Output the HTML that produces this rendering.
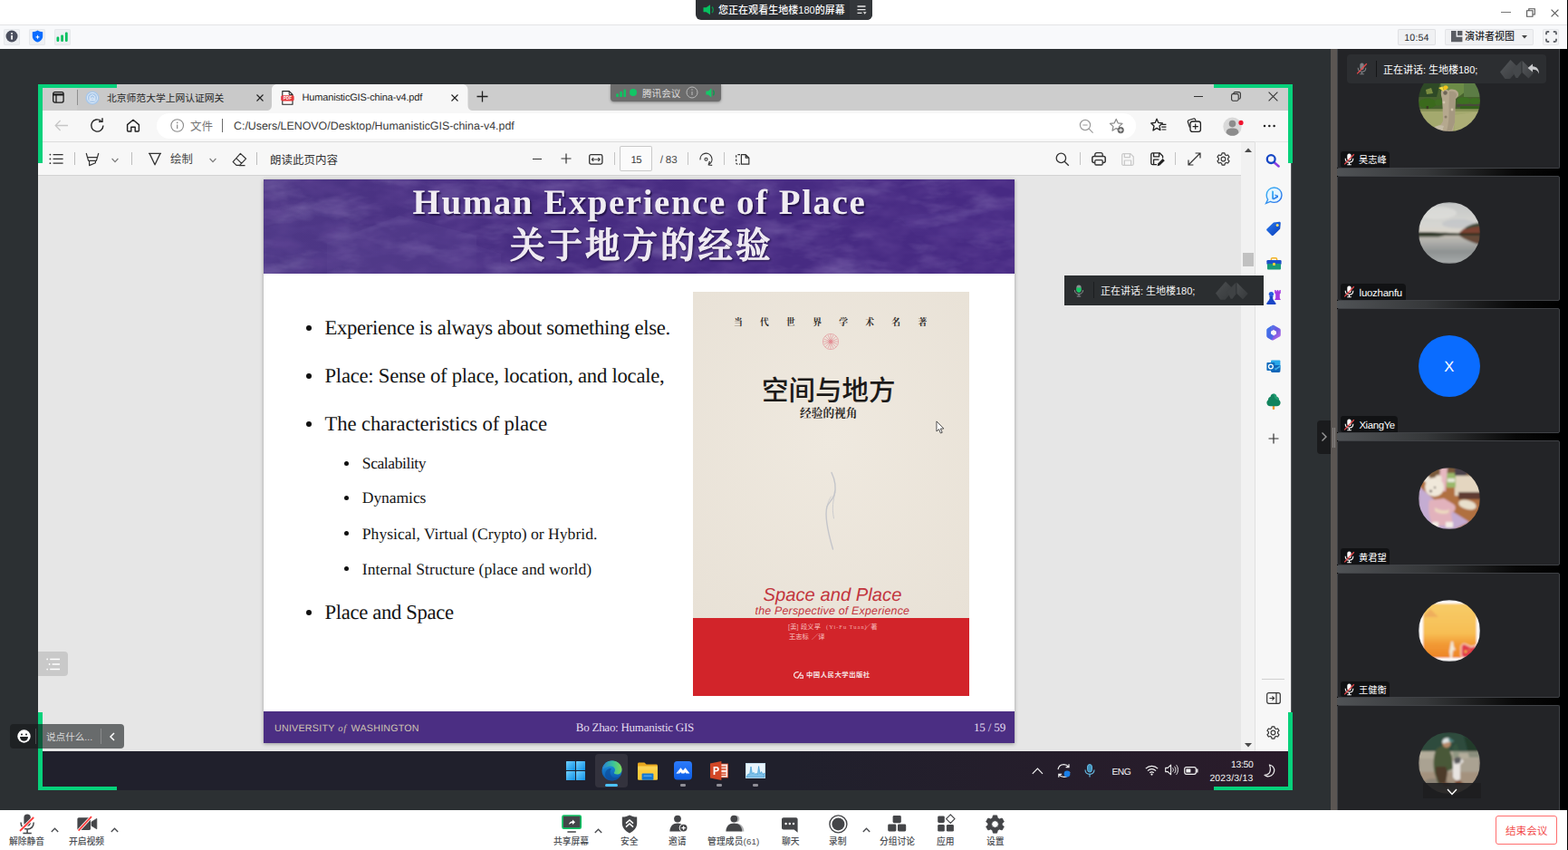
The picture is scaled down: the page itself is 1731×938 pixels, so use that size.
<!DOCTYPE html>
<html><head><meta charset="utf-8"><title>meeting</title>
<style>
html,body{margin:0;padding:0;background:#2c3033;}
body{width:1731px;height:938px;overflow:hidden;position:relative;font-family:"Liberation Sans",sans-serif;}
.a,.t,.cj{position:absolute;}
.t{white-space:pre;text-rendering:geometricPrecision;}
.cj{overflow:visible;}
.cj text{font-family:"Liberation Sans","Noto Sans CJK SC",sans-serif;font-size:1000px;white-space:pre;}
.cj text.sf{font-family:"Liberation Serif","Noto Serif CJK SC",serif;}
svg{display:block;}
.ic{position:absolute;fill:none;stroke:#1b1b1b;stroke-width:1.2;stroke-linecap:round;stroke-linejoin:round;}
</style></head><body>
<!-- ===== top title bar ===== -->
<div class="a" style="left:0;top:0;width:1731px;height:27px;background:#fff;"></div>
<div class="a" style="left:0;top:27px;width:1731px;height:1px;background:#e3e4e6;"></div>
<div class="a" style="left:0;top:28px;width:1731px;height:26px;background:#f8f9fb;"></div>

<!-- left icon buttons -->
<div class="a" style="left:4px;top:31.5px;width:18.4px;height:18px;background:#eef0f3;border-radius:2px;box-shadow:inset 0 0 0 1px #e6e8eb;"></div>
<div class="a" style="left:32px;top:31.5px;width:18.4px;height:18px;background:#eef0f3;border-radius:2px;box-shadow:inset 0 0 0 1px #e6e8eb;"></div>
<div class="a" style="left:60px;top:31.5px;width:18.4px;height:18px;background:#eef0f3;border-radius:2px;box-shadow:inset 0 0 0 1px #e6e8eb;"></div>
<svg class="a" style="left:6.1px;top:33.2px" width="14" height="14" viewBox="0 0 14 14"><circle cx="7" cy="7" r="6.5" fill="#4b4f5e"/><rect x="6.2" y="3.2" width="1.7" height="1.7" fill="#fff"/><rect x="6.2" y="6" width="1.7" height="4.6" fill="#fff"/></svg>
<svg class="a" style="left:34.8px;top:33.2px" width="13" height="14" viewBox="0 0 13 14"><path d="M6.5 .4 C8 1.6 10 2 12.2 2.2 V7 C12.2 10.5 9.5 12.6 6.5 13.6 C3.5 12.6 .8 10.5 .8 7 V2.2 C3 2 5 1.6 6.5 .4Z" fill="#0a6cff"/><path d="M6.5 5.2 L7.2 7.2 L9.2 7.9 L7.2 8.6 L6.5 10.6 L5.8 8.6 L3.8 7.9 L5.8 7.2Z" fill="#fff"/></svg>
<svg class="a" style="left:62.3px;top:34.8px" width="14" height="12" viewBox="0 0 14 12"><rect x=".5" y="5.6" width="2.8" height="5.4" rx="1.2" fill="#07c160"/><rect x="5.2" y="3.4" width="2.8" height="7.6" rx="1.2" fill="#07c160"/><rect x="9.9" y=".6" width="2.8" height="10.4" rx="1.2" fill="#07c160"/></svg>
<!-- center pill -->
<div class="a" style="left:768px;top:0;width:195px;height:21.5px;background:#2d3034;border-radius:0 0 6px 6px;"></div>
<div class="a" style="left:938px;top:0;width:25px;height:21.5px;background:#34373b;border-radius:0 0 6px 0;"></div>
<svg class="a" style="left:775.5px;top:5px" width="14" height="12" viewBox="0 0 14 12"><path d="M.5 3.2 H3.6 L8 .3 V11.2 L3.6 8.3 H.5Z" fill="#07c160"/><path d="M10 2.6 C11.6 4.4 11.6 7.2 10 9" fill="none" stroke="#0a8f4a" stroke-width="1.6"/></svg>
<svg class="cj" style="left:793.0px;top:4.08px;" width="139.81" height="13.20" viewBox="0 -1000 12710 1200" preserveAspectRatio="none"><text x="0" y="0" fill="#ffffff" font-weight="500" textLength="12710">您正在观看生地楼180的屏幕</text></svg>
<svg class="a" style="left:945.5px;top:5.5px" width="11" height="10" viewBox="0 0 11 10"><path d="M.5 1 H9.5 M.5 4.7 H9.5 M.5 8.4 H5.5" stroke="#e8e8e8" stroke-width="1.3" fill="none"/><path d="M6.8 7.3 H10.6 L8.7 9.8Z" fill="#e8e8e8"/></svg>
<!-- window controls -->
<div class="a" style="left:1657px;top:13px;width:11px;height:1.2px;background:#777;"></div>
<svg class="a" style="left:1684.5px;top:8.8px" width="10" height="10" viewBox="0 0 10 10"><path d="M.6 2.8 H7 V9.3 H.6Z M2.8 2.6 V.7 H9.3 V7 H7.2" fill="none" stroke="#555" stroke-width="1.1"/></svg>
<svg class="a" style="left:1712px;top:9.5px" width="9" height="9" viewBox="0 0 9 9"><path d="M.6 .6 L8.4 8.4 M8.4 .6 L.6 8.4" stroke="#555" stroke-width="1.1" fill="none"/></svg>
<!-- right toolbar buttons -->
<div class="a" style="left:1543px;top:31.5px;width:42px;height:18px;background:#f0f1f3;box-shadow:inset 0 0 0 1px #dfe0e3;border-radius:2px;"></div>
<span class="t" style="left:1550.30px;top:37.00px;font:normal normal 10.6px/10.6px 'Liberation Sans',sans-serif;color:#2a2c30;letter-spacing:0.155px;">10:54</span>
<div class="a" style="left:1595px;top:31.5px;width:98px;height:18px;background:#f0f1f3;box-shadow:inset 0 0 0 1px #e3e4e7;border-radius:2px;"></div>
<svg class="a" style="left:1602px;top:34.3px" width="13" height="13" viewBox="0 0 13 13"><path d="M0 0 H5.6 V6.8 H12.4 V12.3 H0Z" fill="#5a5d63"/><rect x="7" y="0" width="5.4" height="5.2" fill="#5a5d63"/></svg>
<svg class="cj" style="left:1617.0px;top:33.18px;" width="55.00" height="13.20" viewBox="0 -1000 5000 1200" preserveAspectRatio="none"><text x="0" y="0" fill="#26282c" font-weight="500">演讲者视图</text></svg>
<svg class="a" style="left:1680px;top:38.5px" width="6" height="4" viewBox="0 0 6 4"><path d="M0 0 H6 L3 3.6Z" fill="#444"/></svg>
<div class="a" style="left:1703px;top:31.5px;width:17.5px;height:18px;background:#f3f4f6;box-shadow:inset 0 0 0 1px #e6e7ea;border-radius:2px;"></div>
<svg class="a" style="left:1705.5px;top:34.2px" width="13" height="13" viewBox="0 0 13 13"><path d="M1 4.2 V2.4 C1 1.4 1.6 1 2.4 1 H4.2 M8.8 1 H10.6 C11.6 1 12 1.6 12 2.4 V4.2 M12 8.8 V10.6 C12 11.6 11.4 12 10.6 12 H8.8 M4.2 12 H2.4 C1.4 12 1 11.4 1 10.6 V8.8" fill="none" stroke="#63666c" stroke-width="1.9"/></svg>
<!--TOPBAR-->
<!-- ===== main dark area ===== -->
<div class="a" style="left:0;top:54px;width:1731px;height:840px;background:#2c3033;"></div>
<!-- ===== shared screen ===== -->
<div class="a" style="left:42px;top:93px;width:1384px;height:779px;background:#e6e6e6;"></div>

<!-- tab bar -->
<div class="a" style="left:42px;top:93px;width:1384px;height:29px;background:#cdcdcd;"></div>
<!-- address row -->
<div class="a" style="left:42px;top:122px;width:1384px;height:34px;background:#f7f7f7;"></div>
<div class="a" style="left:42px;top:156px;width:1343px;height:1px;background:#dcdcdc;"></div>
<div class="a" style="left:173px;top:125px;width:1081px;height:28px;background:#fff;border-radius:14px;"></div>
<!-- pdf toolbar -->
<div class="a" style="left:42px;top:157px;width:1343px;height:36px;background:#f7f7f7;"></div>
<div class="a" style="left:42px;top:193px;width:1328px;height:1px;background:#d2d2d2;"></div>
<!-- pdf scrollbar -->
<div class="a" style="left:1370px;top:157px;width:15px;height:672px;background:#f1f1f1;"></div>
<div class="a" style="left:1372px;top:279px;width:12px;height:15px;background:#c1c1c1;"></div>
<!-- edge sidebar -->
<div class="a" style="left:1385px;top:157px;width:41px;height:672px;background:#f7f7f7;"></div>
<div class="a" style="left:1385px;top:157px;width:1px;height:672px;background:#e0e0e0;"></div>
<!-- slide -->
<div class="a" style="left:291px;top:198px;width:829px;height:622px;background:#fff;box-shadow:0 1px 4px rgba(0,0,0,.35);"></div>
<div class="a" style="left:291px;top:785px;width:829px;height:35px;background:#4b2e83;"></div>
<!-- book -->
<div class="a" style="left:765px;top:682px;width:305px;height:86px;background:#d2242a;"></div>
<!-- taskbar -->
<div class="a" style="left:42px;top:829px;width:1384px;height:43px;background:linear-gradient(90deg,#20202c 0%,#20202c 60%,#2a1b2a 100%);"></div>

<!-- tab bar content -->
<div class="a" style="left:85px;top:93px;width:215px;height:29px;background:#c9c9c9;border-radius:0 0 6px 0;"></div>
<svg class="a" style="left:57.5px;top:101px" width="13" height="13" viewBox="0 0 13 13"><rect x=".7" y=".7" width="11.4" height="11.4" rx="2" fill="none" stroke="#1a1a1a" stroke-width="1.3"/><path d="M.7 3.4 H12.1" stroke="#1a1a1a" stroke-width="2.2"/><path d="M4 3 V12" stroke="#1a1a1a" stroke-width="1.3"/></svg>
<div class="a" style="left:84.5px;top:99px;width:1px;height:17px;background:#8f8f8f;"></div>
<svg class="a" style="left:94px;top:99.5px" width="16" height="16" viewBox="0 0 16 16"><circle cx="8" cy="8" r="7.6" fill="#a9c8ea"/><circle cx="8" cy="8" r="5.6" fill="none" stroke="#dbe9f7" stroke-width="1"/><path d="M5.2 10.5 V6.5 L8 4.5 L10.8 6.5 V10.5 M4.6 10.8 H11.4 M6.8 10.5 V8 H9.2 V10.5" fill="none" stroke="#eaf2fb" stroke-width=".9"/></svg>
<svg class="cj" style="left:118.0px;top:100.6px;" width="129.60" height="12.96" viewBox="0 -1000 12000 1200" preserveAspectRatio="none"><text x="0" y="0" fill="#262626">北京师范大学上网认证网关</text></svg>
<svg class="a" style="left:282.7px;top:103.7px" width="8" height="8" viewBox="0 0 8 8"><path d="M.5 .5 L7.5 7.5 M7.5 .5 L.5 7.5" stroke="#1f1f1f" stroke-width="1.1" fill="none"/></svg>
<!-- active tab -->
<svg class="a" style="left:294px;top:93px" width="230" height="29" viewBox="0 0 230 29"><path d="M0 29 C4 29 6 27 6 23 V6 C6 2.5 8.5 0 12 0 H216.5 C220 0 222.5 2.5 222.5 6 V23 C222.5 27 224.5 29 228.5 29Z" fill="#f7f7f7"/></svg>
<svg class="a" style="left:309.5px;top:99.5px" width="15" height="16" viewBox="0 0 15 16"><path d="M1.8 .6 H9.2 L13 4.4 V15.2 H1.8Z" fill="#fff" stroke="#222" stroke-width="1.1" stroke-linejoin="round"/><path d="M9.2 .6 V4.4 H13" fill="none" stroke="#222" stroke-width="1"/><rect x=".2" y="5.2" width="14.4" height="6.2" rx="1.6" fill="#e5383b"/><text x="7.4" y="10" font-family="Liberation Sans,sans-serif" font-size="4.6" font-weight="bold" fill="#fff" text-anchor="middle">PDF</text></svg>
<span class="t" style="left:333.50px;top:103.00px;font:normal normal 11.0px/11.0px 'Liberation Sans',sans-serif;color:#262626;letter-spacing:-0.167px;">HumanisticGIS-china-v4.pdf</span>
<svg class="a" style="left:498.4px;top:103.6px" width="8" height="8" viewBox="0 0 8 8"><path d="M.5 .5 L7.5 7.5 M7.5 .5 L.5 7.5" stroke="#1f1f1f" stroke-width="1.1" fill="none"/></svg>
<svg class="a" style="left:525.5px;top:100px" width="13" height="13" viewBox="0 0 13 13"><path d="M6.5 .5 V12.5 M.5 6.5 H12.5" stroke="#1f1f1f" stroke-width="1.3" fill="none"/></svg>
<!-- edge window controls -->
<div class="a" style="left:1318px;top:106.2px;width:10px;height:1.2px;background:#333;"></div>
<svg class="a" style="left:1358.5px;top:101.3px" width="11" height="11" viewBox="0 0 11 11"><rect x=".6" y="2.6" width="7.6" height="7.6" rx="1.6" fill="none" stroke="#333" stroke-width="1.1"/><path d="M2.8 2.4 C2.8 1.2 3.6 .6 4.6 .6 H8.4 C9.6 .6 10.4 1.4 10.4 2.6 V6.4 C10.4 7.4 9.8 8.2 8.6 8.2" fill="none" stroke="#333" stroke-width="1.1"/></svg>
<svg class="a" style="left:1400.2px;top:101.3px" width="11" height="11" viewBox="0 0 11 11"><path d="M.6 .6 L10.4 10.4 M10.4 .6 L.6 10.4" stroke="#333" stroke-width="1.1" fill="none"/></svg>
<!-- nav icons -->
<svg class="a" style="left:59.5px;top:132px" width="16" height="13" viewBox="0 0 16 13"><path d="M15 6.5 H1.2 M6.6 1 L1.2 6.5 L6.6 12" fill="none" stroke="#c6c6c6" stroke-width="1.3"/></svg>
<svg class="a" style="left:99px;top:130px" width="17" height="17" viewBox="0 0 17 17"><path d="M14.9 8.5 A6.6 6.6 0 1 1 12.6 3.5" fill="none" stroke="#222" stroke-width="1.4"/><path d="M9.6 3.9 H13.6 V0" fill="none" stroke="#222" stroke-width="1.4" transform="translate(.4,.3)"/></svg>
<svg class="a" style="left:139px;top:131px" width="16" height="15" viewBox="0 0 16 15"><path d="M1.6 6.6 L8 1.2 L14.4 6.6 V13 C14.4 13.6 14 14 13.4 14 H10.2 V9.2 H5.8 V14 H2.6 C2 14 1.6 13.6 1.6 13Z" fill="none" stroke="#222" stroke-width="1.4" stroke-linejoin="round"/></svg>
<svg class="a" style="left:187.5px;top:131px" width="16" height="16" viewBox="0 0 16 16"><circle cx="7.7" cy="7.5" r="6.8" fill="none" stroke="#8a8a8a" stroke-width="1.1"/><path d="M7.7 6.6 V11" stroke="#8a8a8a" stroke-width="1.2"/><circle cx="7.7" cy="4.4" r=".8" fill="#8a8a8a"/></svg>
<svg class="cj" style="left:210.2px;top:130.85px;" width="25.00" height="15.00" viewBox="0 -1000 2000 1200" preserveAspectRatio="none"><text x="0" y="0" fill="#757575">文件</text></svg>
<div class="a" style="left:245px;top:131px;width:1px;height:15px;background:#6a6a6a;"></div>
<span class="t" style="left:258.00px;top:133.00px;font:normal normal 12.4px/12.4px 'Liberation Sans',sans-serif;color:#3a3a3a;letter-spacing:-0.002px;">C:/Users/LENOVO/Desktop/HumanisticGIS-china-v4.pdf</span>
<!-- pdf toolbar left -->
<svg class="a" style="left:54px;top:169px" width="17" height="13" viewBox="0 0 17 13"><path d="M4.6 1.6 H15.6 M4.6 6.4 H15.6 M4.6 11.2 H15.6" stroke="#333" stroke-width="1.3"/><circle cx="1.4" cy="1.6" r=".9" fill="#333"/><circle cx="1.4" cy="6.4" r=".9" fill="#333"/><circle cx="1.4" cy="11.2" r=".9" fill="#333"/></svg>
<div class="a" style="left:82px;top:168px;width:1px;height:14px;background:#bdbdbd;"></div>
<svg class="a" style="left:93.5px;top:167.5px" width="16" height="16" viewBox="0 0 16 16"><path d="M1.2 1 L3.6 9.4 H12.4 L14.8 1 M2.6 5.6 H13.4 M4.6 9.6 V14.6 L11.4 11.8 V9.6" fill="none" stroke="#333" stroke-width="1.2" stroke-linejoin="round"/></svg>
<svg class="a" style="left:122.5px;top:173.5px" width="8" height="6" viewBox="0 0 8 6"><path d="M.6 1 L4 4.6 L7.4 1" fill="none" stroke="#777" stroke-width="1.1"/></svg>
<div class="a" style="left:144.5px;top:168px;width:1px;height:14px;background:#bdbdbd;"></div>
<svg class="a" style="left:162.5px;top:168px" width="16" height="15" viewBox="0 0 16 15"><path d="M1 1.4 H15 M2.2 1.6 L8 13.8 L13.8 1.6" fill="none" stroke="#333" stroke-width="1.3" stroke-linejoin="round"/></svg>
<svg class="cj" style="left:188.0px;top:167.91px;" width="24.80" height="14.88" viewBox="0 -1000 2000 1200" preserveAspectRatio="none"><text x="0" y="0" fill="#444">绘制</text></svg>
<svg class="a" style="left:230.5px;top:173.5px" width="8" height="6" viewBox="0 0 8 6"><path d="M.6 1 L4 4.6 L7.4 1" fill="none" stroke="#777" stroke-width="1.1"/></svg>
<svg class="a" style="left:255.5px;top:167.5px" width="17" height="16" viewBox="0 0 17 16"><path d="M9.4 1.4 L15.6 7.2 L8.6 14.4 H5 L1.2 10.6Z M4.8 6.6 L10.8 12.4 M8 14.6 H14.5" fill="none" stroke="#333" stroke-width="1.2" stroke-linejoin="round"/></svg>
<div class="a" style="left:283px;top:168px;width:1px;height:14px;background:#bdbdbd;"></div>
<svg class="cj" style="left:298.4px;top:167.85px;" width="75.00" height="15.00" viewBox="0 -1000 6000 1200" preserveAspectRatio="none"><text x="0" y="0" fill="#333">朗读此页内容</text></svg>

<!-- address bar right icons -->
<svg class="a" style="left:1191px;top:130.5px" width="17" height="17" viewBox="0 0 17 17"><circle cx="7" cy="7" r="5.6" fill="none" stroke="#9a9a9a" stroke-width="1.2"/><path d="M11.2 11.2 L15.6 15.6 M4.4 7 H9.6" stroke="#9a9a9a" stroke-width="1.2" fill="none"/></svg>
<svg class="a" style="left:1223.5px;top:129.5px" width="19" height="19" viewBox="0 0 19 19"><path d="M8.2 1.4 L10.2 5.8 L15 6.4 L11.4 9.6 L12.2 13.6 L8.2 11.6 L4 14.2 L5 9.6 L1.4 6.4 L6.2 5.8Z" fill="none" stroke="#8a8a8a" stroke-width="1.2" stroke-linejoin="round"/><circle cx="13.2" cy="13.6" r="3.6" fill="#6a6a6a"/><path d="M13.2 11.6 V15.6 M11.2 13.6 H15.2" stroke="#fff" stroke-width="1"/></svg>
<svg class="a" style="left:1269.5px;top:130px" width="19" height="17" viewBox="0 0 19 17"><path d="M7 1.2 L8.9 5.4 L13.4 6 L10 9 L10.9 13.6 L7 11.4 L3 14 L4 9 L.8 6 L5.2 5.4Z" fill="none" stroke="#1f1f1f" stroke-width="1.3" stroke-linejoin="round"/><path d="M12.6 7.4 H17.4 M12.2 10.2 H17.4 M12.6 13 H17.4" stroke="#1f1f1f" stroke-width="1.2"/></svg>
<svg class="a" style="left:1309px;top:130px" width="18" height="18" viewBox="0 0 18 18"><path d="M4.4 10.6 L2.4 4.6 C2.1 3.6 2.6 2.8 3.6 2.5 L8.6 1 C9.6 .7 10.4 1.2 10.7 2.2 L11 3.4" fill="none" stroke="#1f1f1f" stroke-width="1.2"/><rect x="5" y="4" width="11.4" height="11.4" rx="2.4" fill="#f7f7f7" stroke="#1f1f1f" stroke-width="1.3"/><path d="M10.7 6.6 V12.8 M7.6 9.7 H13.8" stroke="#1f1f1f" stroke-width="1.2"/></svg>
<svg class="a" style="left:1349.5px;top:128.5px" width="24" height="22" viewBox="0 0 24 22"><circle cx="10.5" cy="10.8" r="10.2" fill="#d9d9d9"/><circle cx="10.5" cy="7.6" r="3.8" fill="#8c8c8c"/><path d="M3.6 17.4 C3.6 13.6 6.4 12.4 10.5 12.4 C14.6 12.4 17.4 13.6 17.4 17.4 C15.8 19.6 13.4 20.8 10.5 20.8 C7.6 20.8 5.2 19.6 3.6 17.4Z" fill="#8c8c8c"/><circle cx="20" cy="6.4" r="2.6" fill="#f0142f"/></svg>
<svg class="a" style="left:1394px;top:137px" width="15" height="4" viewBox="0 0 15 4"><circle cx="2" cy="2" r="1.25" fill="#1f1f1f"/><circle cx="7.3" cy="2" r="1.25" fill="#1f1f1f"/><circle cx="12.6" cy="2" r="1.25" fill="#1f1f1f"/></svg>
<!-- pdf toolbar center -->
<div class="a" style="left:588px;top:174.6px;width:10px;height:1.2px;background:#333;"></div>
<svg class="a" style="left:619px;top:169px" width="12" height="12" viewBox="0 0 12 12"><path d="M6 .5 V11.5 M.5 6 H11.5" stroke="#333" stroke-width="1.2" fill="none"/></svg>
<svg class="a" style="left:650px;top:169.5px" width="16" height="12" viewBox="0 0 16 12"><rect x=".7" y=".7" width="14.2" height="10.4" rx="1.8" fill="none" stroke="#333" stroke-width="1.3"/><path d="M3.4 6 H12.2 M5.2 4.2 L3.4 6 L5.2 7.8 M10.4 4.2 L12.2 6 L10.4 7.8" fill="none" stroke="#333" stroke-width="1.1"/></svg>
<div class="a" style="left:677.5px;top:168px;width:1px;height:14px;background:#c4c4c4;"></div>
<div class="a" style="left:684px;top:160.5px;width:36px;height:28.5px;background:#fbfbfb;box-shadow:inset 0 0 0 1px #c9c9c9;border-radius:2px;"></div>
<span class="t" style="left:696.40px;top:172.00px;font:normal normal 11.4px/11.4px 'Liberation Sans',sans-serif;color:#3a3a3a;letter-spacing:-0.440px;">15</span>
<span class="t" style="left:728.80px;top:171.00px;font:normal normal 11.6px/11.6px 'Liberation Sans',sans-serif;color:#4a4a4a;letter-spacing:-0.187px;">/ 83</span>
<div class="a" style="left:758.5px;top:168px;width:1px;height:14px;background:#c4c4c4;"></div>
<svg class="a" style="left:771px;top:166.5px" width="18" height="18" viewBox="0 0 18 18"><path d="M2 9.4 A6.5 6.5 0 1 1 11.6 14.4" fill="none" stroke="#333" stroke-width="1.2"/><path d="M12.4 11 L11.2 15 L15.2 15.4" fill="none" stroke="#333" stroke-width="1.2" stroke-linejoin="round"/><circle cx="8.5" cy="8.7" r="1.5" fill="none" stroke="#333" stroke-width="1.1"/></svg>
<div class="a" style="left:799px;top:168px;width:1px;height:14px;background:#c4c4c4;"></div>
<svg class="a" style="left:811.5px;top:169.5px" width="16" height="12" viewBox="0 0 16 12"><path d="M6.4 .7 H11.2 L14.8 4.2 V11.2 H6.4Z M11.2 .7 V4.2 H14.8" fill="none" stroke="#333" stroke-width="1.2" stroke-linejoin="round"/><path d="M5 .7 H2.2 C1.2 .7 .7 1.2 .7 2.2 V9.8 C.7 10.8 1.2 11.2 2.2 11.2 H5" fill="none" stroke="#333" stroke-width="1.2" stroke-dasharray="2.6 1.6"/></svg>
<!-- pdf toolbar right -->
<svg class="a" style="left:1164.5px;top:167.5px" width="16" height="16" viewBox="0 0 16 16"><circle cx="6.4" cy="6.4" r="5.2" fill="none" stroke="#333" stroke-width="1.3"/><path d="M10.2 10.2 L14.8 14.8" stroke="#333" stroke-width="1.3"/></svg>
<div class="a" style="left:1192px;top:168px;width:1px;height:14px;background:#c4c4c4;"></div>
<svg class="a" style="left:1204.5px;top:168px" width="16" height="15" viewBox="0 0 16 15"><path d="M3.8 4.4 V2.6 C3.8 1.4 4.6 .7 5.8 .7 H10.2 C11.4 .7 12.2 1.4 12.2 2.6 V4.4" fill="none" stroke="#333" stroke-width="1.3"/><rect x=".8" y="4.4" width="14.4" height="7" rx="2" fill="none" stroke="#333" stroke-width="1.5"/><rect x="3.8" y="8.6" width="8.4" height="5.4" rx="1.2" fill="#f7f7f7" stroke="#333" stroke-width="1.3"/></svg>
<svg class="a" style="left:1238px;top:168.5px" width="14" height="14" viewBox="0 0 14 14"><path d="M.7 2.2 C.7 1.2 1.2 .7 2.2 .7 H10 L13.3 4 V11.8 C13.3 12.8 12.8 13.3 11.8 13.3 H2.2 C1.2 13.3 .7 12.8 .7 11.8Z M3.4 .8 V4.6 H9.4 V.8 M3.4 13.2 V8 H10.6 V13.2" fill="none" stroke="#c9c9c9" stroke-width="1.2" stroke-linejoin="round"/></svg>
<svg class="a" style="left:1270px;top:168px" width="17" height="16" viewBox="0 0 17 16"><path d="M7 13.6 H2.4 C1.4 13.6 .8 13 .8 12 V2.4 C.8 1.4 1.4 .8 2.4 .8 H10.2 L13.6 4.2 V6.4 M3.6 1 V4.8 H9.6 V1 M3.6 13.4 V8.2 H9.4" fill="none" stroke="#222" stroke-width="1.3" stroke-linejoin="round"/><path d="M13.6 7 L15.8 9.2 L10.4 14.6 L7.6 15.2 L8.2 12.4Z" fill="#222"/></svg>
<div class="a" style="left:1297px;top:168px;width:1px;height:14px;background:#c4c4c4;"></div>
<svg class="a" style="left:1311px;top:168px" width="15" height="15" viewBox="0 0 15 15"><path d="M1 14 L14 1 M8.6 1 H14 V6.4 M1 8.6 V14 H6.4" fill="none" stroke="#333" stroke-width="1.2"/></svg>
<svg class="a" style="left:1342px;top:167px" width="17" height="17" viewBox="0 0 24 24"><path d="M12 8.6 A3.4 3.4 0 1 0 12 15.4 A3.4 3.4 0 1 0 12 8.600001Z M10 2.6 L9.4 5.2 L7.4 6.4 L4.8 5.6 L2.8 9 L4.8 10.8 V13.2 L2.8 15 L4.8 18.4 L7.4 17.6 L9.4 18.8 L10 21.4 H14 L14.6 18.8 L16.6 17.6 L19.2 18.4 L21.2 15 L19.2 13.2 V10.8 L21.2 9 L19.2 5.6 L16.6 6.4 L14.6 5.2 L14 2.6Z" fill="none" stroke="#333" stroke-width="1.7" stroke-linejoin="round"/></svg>
<svg class="a" style="left:1373.5px;top:163px" width="8" height="5" viewBox="0 0 8 5"><path d="M0 5 L4 .4 L8 5Z" fill="#4a4a4a"/></svg>
<svg class="a" style="left:1373.5px;top:819.5px" width="8" height="5" viewBox="0 0 8 5"><path d="M0 0 L4 4.6 L8 0Z" fill="#4a4a4a"/></svg>

<!-- slide header decoration -->
<svg class="a" style="left:291px;top:198px" width="829" height="104" viewBox="0 0 829 104">
<defs><linearGradient id="hg" x1="0" y1="0" x2="1" y2="0"><stop offset="0" stop-color="#4c3684"/><stop offset=".4" stop-color="#472c81"/><stop offset="1" stop-color="#472a83"/></linearGradient>
<filter id="nz" x="0" y="0" width="100%" height="100%"><feTurbulence type="fractalNoise" baseFrequency="0.018 0.045" numOctaves="4" seed="11"/><feColorMatrix type="matrix" values="0 0 0 0 0.62  0 0 0 0 0.55  0 0 0 0 0.85  0.6 0 0 0 -0.29"/></filter>
<filter id="nz2" x="0" y="0" width="100%" height="100%"><feTurbulence type="fractalNoise" baseFrequency="0.03 0.06" numOctaves="3" seed="4"/><feColorMatrix type="matrix" values="0 0 0 0 0.16  0 0 0 0 0.08  0 0 0 0 0.36  0 0.7 0 0 -0.25"/></filter></defs>
<rect width="829" height="104" fill="url(#hg)"/>
<rect width="829" height="104" filter="url(#nz)"/>
<rect width="829" height="104" filter="url(#nz2)"/>
<g fill="#6a55a0" opacity=".2"><path d="M70 70 L150 40 L235 62 L235 104 L70 104Z"/><path d="M130 78 L215 66 L262 82 L262 104 L130 104Z" opacity=".8"/><path d="M0 55 L60 30 L95 45 L95 104 L0 104Z" opacity=".5"/><path d="M700 40 L829 30 L829 70 L720 62Z" opacity=".4"/></g>
</svg>
<span class="t" style="left:455.60px;top:204.00px;font:normal bold 39.0px/39.0px 'Liberation Serif',serif;color:#f0ecf2;letter-spacing:1.528px;text-shadow:1.5px 1.5px 1.5px rgba(20,8,50,.75);">Human Experience of Place</span>
<svg class="cj" style="left:562.94px;top:245.93px;filter:drop-shadow(1.5px 1.5px 1px rgba(20,8,50,.75));" width="287.52" height="46.20" viewBox="0 -1000 7468 1200" preserveAspectRatio="none"><text class="sf" x="0" y="0" fill="#efeaf2" stroke="#efeaf2" stroke-width="36.0" font-weight="500" letter-spacing="78">关于地方的经验</text></svg>
<!-- slide body -->
<div class="a" style="left:338.5px;top:359px;width:6.4px;height:6.4px;margin:-.5px 0 0 -.5px;border-radius:50%;background:#111;"></div>
<span class="t" style="left:358.50px;top:351.00px;font:normal normal 22.7px/22.7px 'Liberation Serif',serif;color:#141414;letter-spacing:-0.312px;">Experience is always about something else.</span>
<div class="a" style="left:338.5px;top:412.3px;width:6.4px;height:6.4px;margin:-.5px 0 0 -.5px;border-radius:50%;background:#111;"></div>
<span class="t" style="left:358.50px;top:404.00px;font:normal normal 22.7px/22.7px 'Liberation Serif',serif;color:#141414;letter-spacing:-0.254px;">Place: Sense of place, location, and locale,</span>
<div class="a" style="left:338.5px;top:465.4px;width:6.4px;height:6.4px;margin:-.5px 0 0 -.5px;border-radius:50%;background:#111;"></div>
<span class="t" style="left:358.50px;top:457.00px;font:normal normal 22.7px/22.7px 'Liberation Serif',serif;color:#141414;letter-spacing:-0.122px;">The characteristics of place</span>
<div class="a" style="left:380px;top:509px;width:5px;height:5px;margin:-.4px 0 0 -.4px;border-radius:50%;background:#111;"></div>
<span class="t" style="left:399.80px;top:503.00px;font:normal normal 17.6px/17.6px 'Liberation Serif',serif;color:#141414;letter-spacing:-0.443px;">Scalability</span>
<div class="a" style="left:380px;top:547px;width:5px;height:5px;margin:-.4px 0 0 -.4px;border-radius:50%;background:#111;"></div>
<span class="t" style="left:399.80px;top:541.00px;font:normal normal 17.6px/17.6px 'Liberation Serif',serif;color:#141414;letter-spacing:-0.095px;">Dynamics</span>
<div class="a" style="left:380px;top:586.7px;width:5px;height:5px;margin:-.4px 0 0 -.4px;border-radius:50%;background:#111;"></div>
<span class="t" style="left:399.80px;top:581.00px;font:normal normal 17.6px/17.6px 'Liberation Serif',serif;color:#141414;letter-spacing:-0.001px;">Physical, Virtual (Crypto) or Hybrid.</span>
<div class="a" style="left:380px;top:625.6px;width:5px;height:5px;margin:-.4px 0 0 -.4px;border-radius:50%;background:#111;"></div>
<span class="t" style="left:399.80px;top:620.00px;font:normal normal 17.6px/17.6px 'Liberation Serif',serif;color:#141414;letter-spacing:0.037px;">Internal Structure (place and world)</span>
<div class="a" style="left:338.5px;top:673.6px;width:6.4px;height:6.4px;margin:-.5px 0 0 -.5px;border-radius:50%;background:#111;"></div>
<span class="t" style="left:358.50px;top:665.00px;font:normal normal 22.7px/22.7px 'Liberation Serif',serif;color:#141414;letter-spacing:-0.346px;">Place and Space</span>
<!-- slide footer -->
<span class="t" style="left:303.00px;top:799.00px;font:normal normal 10.7px/10.7px 'Liberation Sans',sans-serif;color:#cfc5b2;letter-spacing:0.239px;">UNIVERSITY</span>
<span class="t" style="left:373.20px;top:800.00px;font:italic normal 10.5px/10.5px 'Liberation Serif',serif;color:#cfc5b2;letter-spacing:0.716px;">of</span>
<span class="t" style="left:387.60px;top:799.00px;font:normal normal 10.7px/10.7px 'Liberation Sans',sans-serif;color:#cfc5b2;letter-spacing:0.218px;">WASHINGTON</span>
<span class="t" style="left:635.80px;top:796.00px;font:normal normal 13.0px/13.0px 'Liberation Serif',serif;color:#e4ddef;letter-spacing:-0.258px;">Bo Zhao: Humanistic GIS</span>
<span class="t" style="left:1075.00px;top:796.00px;font:normal normal 13.0px/13.0px 'Liberation Serif',serif;color:#e4ddef;letter-spacing:-0.159px;">15 / 59</span>

<!-- book cover content -->
<svg class="a" style="left:765px;top:322px" width="305" height="360" viewBox="0 0 305 360"><defs><radialGradient id="bk" cx=".5" cy=".45" r=".75"><stop offset="0" stop-color="#efe9df"/><stop offset="1" stop-color="#e8e1d6"/></radialGradient></defs><rect width="305" height="360" fill="url(#bk)"/>
<g fill="none" stroke="#e0868e" stroke-width=".6"><circle cx="152" cy="55" r="8.6"/><circle cx="152" cy="55" r="2"/><path d="M152 47 V63 M144 55 H160 M146.3 49.3 L157.7 60.7 M157.7 49.3 L146.3 60.7 M149 47.6 L155 62.4 M155 47.6 L149 62.4 M144.6 52 L159.4 58 M144.6 58 L159.4 52"/></g>
<g fill="none" stroke="#c4c5ca" stroke-width="1.4" stroke-linecap="round"><path d="M153 199.5 C157 208 158.5 216 156 224 C154 230 150 232 148 237 C145.5 246 148 262 154.5 284"/><path d="M157 221 C155 230 153 238 155.5 250" stroke-width=".8"/><path d="M148 237 C149 232 151 228 152.5 226" stroke-width=".7"/></g></svg>
<svg class="cj" style="left:810.0px;top:348.72px;" width="213.89" height="11.76" viewBox="0 -1000 21825 1200" preserveAspectRatio="none"><text class="sf" x="0" y="0" fill="#2e2b28" font-weight="bold" letter-spacing="1967">当代世界学术名著</text></svg>
<svg class="cj" style="left:841.4px;top:411.51px;" width="147.50" height="35.40" viewBox="0 -1000 5000 1200" preserveAspectRatio="none"><text x="0" y="0" fill="#1c1a19" font-weight="500">空间与地方</text></svg>
<svg class="cj" style="left:883.0px;top:447.13px;" width="63.50" height="15.24" viewBox="0 -1000 5000 1200" preserveAspectRatio="none"><text class="sf" x="0" y="0" fill="#2a2725" font-weight="bold">经验的视角</text></svg>
<span class="t" style="left:842.50px;top:647.00px;font:italic normal 20.2px/20.2px 'Liberation Sans',sans-serif;color:#c2353d;letter-spacing:0.018px;">Space and Place</span>
<span class="t" style="left:833.50px;top:668.00px;font:italic normal 12.4px/12.4px 'Liberation Sans',sans-serif;color:#c2353d;letter-spacing:0.209px;">the Perspective of Experience</span>
<svg class="cj" style="left:869.8px;top:687.47px;" width="36.04" height="8.76" viewBox="0 -1000 4937 1200" preserveAspectRatio="none"><text x="0" y="0" fill="#f2a9a9" font-weight="500" textLength="4937">[美] 段义孚</text></svg><svg class="cj" style="left:912.3px;top:688.23px;" width="44.73" height="7.68" viewBox="0 -1000 6989 1200" preserveAspectRatio="none"><text class="sf" x="0" y="0" fill="#f2a9a9" textLength="6989">(Yi-Fu Tuan)</text></svg><svg class="cj" style="left:953.6px;top:687.47px;" width="14.60" height="8.76" viewBox="0 -1000 2000 1200" preserveAspectRatio="none"><text x="0" y="0" fill="#f2a9a9" font-weight="500">／著</text></svg>
<svg class="cj" style="left:870.6px;top:698.37px;" width="21.90" height="8.76" viewBox="0 -1000 3000 1200" preserveAspectRatio="none"><text x="0" y="0" fill="#f2a9a9" font-weight="500">王志标</text></svg><svg class="cj" style="left:895.5px;top:698.37px;" width="14.60" height="8.76" viewBox="0 -1000 2000 1200" preserveAspectRatio="none"><text x="0" y="0" fill="#f2a9a9" font-weight="500">／译</text></svg>
<svg class="a" style="left:876px;top:741px" width="11.4" height="8" viewBox="0 0 10 7"><path d="M5 .6 C2 .2 .5 1.8 .5 3.4 C.5 5.4 2.4 6.6 4.6 6.2 M4.2 6.2 L7.4 .8 M6.4 4 C7.4 3.4 8.8 3.6 9.4 4.6 L9.6 6.2 H6" fill="none" stroke="#f6e4e4" stroke-width="1.1"/></svg>
<svg class="cj" style="left:890.3px;top:740.41px;" width="70.45" height="8.88" viewBox="0 -1000 9520 1200" preserveAspectRatio="none"><text x="0" y="0" fill="#f6e4e4" font-weight="bold" letter-spacing="65">中国人民大学出版社</text></svg>

<!-- taskbar icons -->
<svg class="a" style="left:624.8px;top:840.3px" width="21" height="21" viewBox="0 0 21 21"><defs><linearGradient id="wl" x1="0" y1="0" x2="1" y2="1"><stop offset="0" stop-color="#6fd0ff"/><stop offset="1" stop-color="#1292e6"/></linearGradient></defs><rect x="0" y="0" width="10" height="10" rx=".6" fill="url(#wl)"/><rect x="11" y="0" width="10" height="10" rx=".6" fill="url(#wl)"/><rect x="0" y="11" width="10" height="10" rx=".6" fill="url(#wl)"/><rect x="11" y="11" width="10" height="10" rx=".6" fill="url(#wl)"/></svg>
<div class="a" style="left:657px;top:832px;width:36px;height:36.5px;background:#33323d;border-radius:4px;"></div>
<svg class="a" style="left:664px;top:839px" width="23" height="23" viewBox="0 0 23 23"><defs><linearGradient id="e1" x1="0" y1="0" x2="1" y2="0"><stop offset="0" stop-color="#2a7fd6"/><stop offset=".55" stop-color="#3ac29a"/><stop offset="1" stop-color="#7ed957"/></linearGradient><linearGradient id="e2" x1="0" y1="0" x2="0" y2="1"><stop offset="0" stop-color="#1c9be8"/><stop offset="1" stop-color="#0b52a8"/></linearGradient></defs><circle cx="11.5" cy="11.5" r="11" fill="url(#e2)"/><path d="M1 9.5 C2.5 3.5 7 .5 11.8 .5 C18 .5 22.5 5 22.5 10 C22.5 13.6 20 15.6 17.2 15.6 C15 15.6 13.6 14.8 13.8 13.6 C14.6 12.8 15 11.8 15 10.6 C15 8.4 13 6.6 10.2 6.6 C6 6.6 2.6 9.6 1 9.5Z" fill="url(#e1)"/><path d="M9.6 13.2 C9.6 17.2 13 20 17 19.2 C18.6 18.8 20 17.8 21 16.6 C19.6 20.2 16 22.5 12 22.5 C8.5 22.5 5.6 20.6 4.4 17.4 C3.4 14.4 4.8 10.6 8 9.4 C9 9 10.2 9 11 9.4 C10 10.4 9.6 11.8 9.6 13.2Z" fill="#0d4f9e" opacity=".75"/></svg>
<div class="a" style="left:668px;top:864.7px;width:14.4px;height:3.1px;border-radius:1.6px;background:#4cc2ff;"></div>
<svg class="a" style="left:703.8px;top:841px" width="22" height="20" viewBox="0 0 22 20"><path d="M0 2 C0 1 .6 .4 1.6 .4 H7.4 L9.6 2.6 H20.4 C21.4 2.6 22 3.2 22 4.2 V7 H0Z" fill="#e8a71f"/><rect x="0" y="4.6" width="22" height="15.2" rx="1.2" fill="#fccb3a"/><rect x="0" y="4.6" width="22" height="4" fill="#fdd964" opacity=".6"/><rect x="4.6" y="12.6" width="12.8" height="7.2" rx="1" fill="#1576d1"/><rect x="6.4" y="14.4" width="9.2" height="1.6" rx=".6" fill="#4aa3ee"/></svg>
<svg class="a" style="left:744.3px;top:840.2px" width="20" height="20.4" viewBox="0 0 20 20.4"><defs><linearGradient id="tm" x1="0" y1="0" x2="0" y2="1"><stop offset="0" stop-color="#2c7bfb"/><stop offset="1" stop-color="#0d5ee6"/></linearGradient></defs><rect width="20" height="20.4" rx="3.6" fill="url(#tm)"/><path d="M2.6 13.4 L7.4 7.2 L10 10.2 L12.6 7.2 L17.4 13.4 H13.4 L12.6 12.2 L11.4 13.4 H8.4 L7.4 12 L6.2 13.4Z" fill="#fff"/><path d="M2.6 13.4 L5.2 10 L6.6 12.8Z" fill="#cfe0ff"/></svg>
<div class="a" style="left:751.4px;top:865.3px;width:6px;height:2.4px;border-radius:1.2px;background:#8f8e96;"></div>
<svg class="a" style="left:784px;top:840.2px" width="20" height="21" viewBox="0 0 20 21"><rect x="8" y="3" width="11.6" height="15" fill="#fbe9e4" stroke="#d24726" stroke-width=".8"/><path d="M11.5 6.2 H17.5 M11.5 9 H17.5 M11.5 13 H17.5 M11.5 15.4 H17.5" stroke="#d24726" stroke-width="1.3"/><path d="M0 2.4 L12.4 0 V21 L0 18.6Z" fill="#d24726"/><path d="M3.6 15 V6 H6.8 C8.8 6 9.8 7.2 9.8 8.8 C9.8 10.6 8.6 11.6 6.8 11.6 H5.4 V15Z M5.4 7.6 V10 H6.6 C7.4 10 7.9 9.6 7.9 8.8 C7.9 8 7.4 7.6 6.6 7.6Z" fill="#fff" fill-rule="evenodd"/></svg>
<div class="a" style="left:791px;top:865.3px;width:6px;height:2.4px;border-radius:1.2px;background:#8f8e96;"></div>
<svg class="a" style="left:823px;top:842.2px" width="22" height="17" viewBox="0 0 22 17"><rect width="22" height="17" fill="#e9f4fb"/><rect x=".4" y=".4" width="21.2" height="16.2" fill="none" stroke="#b9d6ea" stroke-width=".8"/><path d="M1 15.6 L3 12 L4.6 12.6 L6 4 L7.4 12 L9 10.4 L10.6 12.4 L12 11.4 L13.4 12.6 L14.6 3.6 L16 12 L17.6 9.6 L19 12.6 L21 11 V15.6Z" fill="#7fc0e8" stroke="#3e9bd3" stroke-width=".7"/></svg>
<div class="a" style="left:831px;top:865.3px;width:6px;height:2.4px;border-radius:1.2px;background:#8f8e96;"></div>
<!-- tray -->
<svg class="a" style="left:1139px;top:847px" width="13" height="8" viewBox="0 0 13 8"><path d="M.8 6.8 L6.4 1.2 L12 6.8" fill="none" stroke="#f2f2f2" stroke-width="1.2"/></svg>
<svg class="a" style="left:1165.5px;top:842px" width="17" height="17" viewBox="0 0 17 17"><path d="M2 7.2 C2.6 3.8 5.2 1.6 8.4 1.6 C10.6 1.6 12.4 2.6 13.6 4.2 M14 1.2 V4.6 H10.6 M14.8 9.8 C14.2 13.2 11.6 15.4 8.4 15.4 C6.2 15.4 4.4 14.4 3.2 12.8 M2.8 15.8 V12.4 H6.2" fill="none" stroke="#f2f2f2" stroke-width="1.2"/><circle cx="12" cy="12" r="3.4" fill="#1a7fe8"/></svg>
<svg class="a" style="left:1196.5px;top:843px" width="12" height="15" viewBox="0 0 12 15"><rect x="3.6" y=".6" width="4.8" height="8.4" rx="2.4" fill="#3f8fb8" stroke="#69c0ea" stroke-width="1"/><path d="M1 6.6 C1 9.6 3 11.4 6 11.4 C9 11.4 11 9.6 11 6.6 M6 11.4 V14.4" fill="none" stroke="#69c0ea" stroke-width="1.1"/></svg>
<span class="t" style="left:1227.40px;top:848.00px;font:normal normal 10.3px/10.3px 'Liberation Sans',sans-serif;color:#f4f4f4;letter-spacing:-0.507px;">ENG</span>
<svg class="a" style="left:1263.7px;top:843.6px" width="15" height="12" viewBox="0 0 15 12"><path d="M.8 4.2 C4.6 .4 10.4 .4 14.2 4.2 M3 6.6 C5.6 4 9.4 4 12 6.6 M5.2 8.8 C6.6 7.6 8.4 7.6 9.8 8.8" fill="none" stroke="#f2f2f2" stroke-width="1.2"/><circle cx="7.5" cy="10.6" r="1.1" fill="#f2f2f2"/></svg>
<svg class="a" style="left:1285.8px;top:843.4px" width="15" height="13" viewBox="0 0 15 13"><path d="M.7 4.4 H3.2 L6.6 1.2 V11.8 L3.2 8.6 H.7Z" fill="none" stroke="#f2f2f2" stroke-width="1.1" stroke-linejoin="round"/><path d="M8.6 4.4 C9.6 5.6 9.6 7.4 8.6 8.6 M10.6 2.8 C12.4 5 12.4 8 10.6 10.2 M12.6 1.2 C15 4.2 15 8.8 12.6 11.8" fill="none" stroke="#f2f2f2" stroke-width="1"/></svg>
<svg class="a" style="left:1307px;top:846.3px" width="16" height="9" viewBox="0 0 16 9"><rect x=".7" y=".7" width="12.6" height="7.6" rx="2" fill="none" stroke="#f2f2f2" stroke-width="1.2"/><rect x="2.4" y="2.4" width="5" height="4.2" rx=".6" fill="#f2f2f2"/><path d="M14.8 3 V6" stroke="#f2f2f2" stroke-width="1.4" stroke-linecap="round"/></svg>
<span class="t" style="left:1359.10px;top:840.00px;font:normal normal 10.4px/10.4px 'Liberation Sans',sans-serif;color:#f4f4f4;letter-spacing:-0.345px;">13:50</span>
<span class="t" style="left:1335.40px;top:855.00px;font:normal normal 10.4px/10.4px 'Liberation Sans',sans-serif;color:#f4f4f4;letter-spacing:0.193px;">2023/3/13</span>
<svg class="a" style="left:1394.5px;top:843px" width="14" height="15" viewBox="0 0 14 15"><path d="M6.4 1 C9.6 1.6 12.4 4.4 11.6 8.4 C10.8 12.2 7 14.4 3.4 13.6 C2.4 13.4 1.6 13 1 12.4 C4.6 12.2 7.2 9.8 7.4 6.4 C7.5 4.4 7.2 2.6 6.4 1Z" fill="none" stroke="#f2f2f2" stroke-width="1.2" stroke-linejoin="round"/></svg>

<!-- edge sidebar icons -->
<div class="a" style="left:1425px;top:97px;width:1px;height:775px;background:#5a5d60;"></div>
<svg class="a" style="left:1396px;top:168px" width="19" height="18" viewBox="0 0 19 18"><path d="M10.4 11 L15.6 15.4" stroke="#8a3fe0" stroke-width="2.6" stroke-linecap="round"/><circle cx="7.2" cy="7.6" r="4.4" fill="none" stroke="#1446c4" stroke-width="2.3"/></svg>
<svg class="a" style="left:1395.5px;top:205.5px" width="21" height="20" viewBox="0 0 21 20"><defs><linearGradient id="bg1" x1="0" y1="0" x2="1" y2="1"><stop offset="0" stop-color="#39b6f5"/><stop offset="1" stop-color="#2a6be8"/></linearGradient></defs><path d="M10.6 1 C15.4 1 19 4.6 19 9.2 C19 13.8 15.4 17.4 10.6 17.4 C9 17.4 7.6 17 6.4 16.4 L1.6 18.4 L3.6 14.2 C2.6 12.8 2.2 11 2.2 9.2 C2.2 4.6 5.8 1 10.6 1Z" fill="#e4f5ff" stroke="url(#bg1)" stroke-width="1.4"/><path d="M8.2 4.4 L10 5 V12.4 L13.2 10.8 L11.6 10 L11 8.4 L15 9.8 V11.8 L10 14.6 L8.2 13.4Z" fill="url(#bg1)"/></svg>
<svg class="a" style="left:1397px;top:244px" width="18" height="17" viewBox="0 0 18 17"><defs><linearGradient id="tg" x1="0" y1="0" x2="1" y2="1"><stop offset="0" stop-color="#2a7cf0"/><stop offset="1" stop-color="#0a3cb8"/></linearGradient></defs><path d="M9 1.4 L15.4 .8 C16.2 .8 16.8 1.4 16.8 2.2 L16.2 8.6 L8.8 15.8 C8.2 16.4 7.4 16.4 6.8 15.8 L1.6 10.6 C1 10 1 9.2 1.6 8.6Z" fill="url(#tg)"/><circle cx="13.2" cy="4.4" r="1.5" fill="#ffe26a"/></svg>
<svg class="a" style="left:1397.5px;top:284px" width="17" height="14" viewBox="0 0 17 14"><path d="M5.4 3.2 V2 C5.4 1.2 6 .7 6.8 .7 H10.2 C11 .7 11.6 1.2 11.6 2 V3.2" fill="none" stroke="#f2b020" stroke-width="1.4"/><rect x=".4" y="3" width="16.2" height="5" rx="1.2" fill="#1c4fc8"/><rect x="1" y="7" width="15" height="6.4" rx="1" fill="#1a9a78"/><rect x="7.2" y="6" width="2.6" height="3" rx=".6" fill="#ffd23a"/></svg>
<svg class="a" style="left:1397px;top:319px" width="18" height="18" viewBox="0 0 18 18"><path d="M10.2 1 H11.6 V2.2 H12.8 V1 H14.2 V2.2 H15.4 V1 H16.8 V4.4 L15.8 5.4 V10 L17 12 H10 L11.2 10 V5.4 L10.2 4.4Z" fill="#a43ae0"/><circle cx="6.4" cy="5.6" r="2.7" fill="#2a5ce0"/><path d="M4.2 8 H8.6 L8 9.4 C8.4 11.4 9.4 13 10.6 14 V15 H11.4 V17 H1.4 V15 H2.2 V14 C3.4 13 4.4 11.4 4.8 9.4Z" fill="#1a46c8"/></svg>
<svg class="a" style="left:1397px;top:358px" width="18" height="18" viewBox="0 0 18 18"><defs><linearGradient id="m3a" x1="0" y1="0" x2="1" y2="1"><stop offset="0" stop-color="#4a8cf0"/><stop offset=".5" stop-color="#6a5ae0"/><stop offset="1" stop-color="#c86ae8"/></linearGradient></defs><path d="M9 .8 L15.6 4.6 C16.4 5 16.8 5.8 16.8 6.6 V11.4 C16.8 12.2 16.4 13 15.6 13.4 L9 17.2 C8.2 17.6 7.4 17.6 6.8 17.2 L3 15 C2 14.4 1.4 13.6 1.4 12.4 V6.4 C1.4 5.4 2 4.6 3 4 L6.8 1.4 C7.4 .8 8.2 .6 9 .8Z" fill="url(#m3a)"/><path d="M9 6 L12 7.8 V10.6 L9 12.4 L6 10.6 V7.8Z" fill="#f7f7f7"/><path d="M1.4 12.4 V6.4 C1.4 5.4 2 4.6 3 4 L6 2 V10.6 L9 12.4 L6.8 17.2 L3 15 C2 14.4 1.4 13.6 1.4 12.4Z" fill="#3a6ee8" opacity=".7"/></svg>
<svg class="a" style="left:1398px;top:397px" width="16" height="15" viewBox="0 0 16 15"><rect x="5" y=".6" width="10.4" height="11" rx="1" fill="#28a8ea"/><path d="M5 6 H15.4 V12.6 C15.4 13.4 14.8 14 14 14 H6.4 C5.6 14 5 13.4 5 12.6Z" fill="#1066b8"/><path d="M5 6 L10.2 9.6 L15.4 6 V8 L10.2 11.4 L5 8Z" fill="#50c8f8" opacity=".8"/><rect x=".4" y="3" width="9" height="9" rx="1" fill="#0f6cbd"/><circle cx="4.9" cy="7.5" r="2.4" fill="none" stroke="#fff" stroke-width="1.3"/></svg>
<svg class="a" style="left:1397.5px;top:433.5px" width="16" height="19" viewBox="0 0 16 19"><rect x="6.8" y="13" width="2.4" height="5" rx=".8" fill="#f29a2e"/><path d="M8 .6 C10 .6 11.4 2 11.4 3.8 C13 4.2 14 5.6 14 7.2 C15 8 15.6 9 15.6 10.4 C15.6 12.6 13.8 14.2 11.6 14.2 H4.4 C2.2 14.2 .4 12.6 .4 10.4 C.4 9 1 8 2 7.2 C2 5.6 3 4.2 4.6 3.8 C4.6 2 6 .6 8 .6Z" fill="#12845e"/><path d="M8 .6 C10 .6 11.4 2 11.4 3.8 C13 4.2 14 5.6 14 7.2 C11 8 9 6 8 .6Z" fill="#2aa87a" opacity=".7"/></svg>
<svg class="a" style="left:1399.5px;top:477.5px" width="12" height="12" viewBox="0 0 12 12"><path d="M6 .5 V11.5 M.5 6 H11.5" stroke="#333" stroke-width="1.2"/></svg>
<div class="a" style="left:1393px;top:748.5px;width:25px;height:1px;background:#d0d0d0;"></div>
<svg class="a" style="left:1397.5px;top:763.5px" width="16" height="13" viewBox="0 0 16 13"><rect x=".7" y=".7" width="14.6" height="11.6" rx="2" fill="none" stroke="#333" stroke-width="1.2"/><path d="M11 .8 V12.2 M3.4 6.5 H8.4 M6.4 4.4 L8.6 6.5 L6.4 8.6" fill="none" stroke="#333" stroke-width="1.2"/></svg>
<svg class="a" style="left:1397px;top:799.5px" width="17" height="17" viewBox="0 0 24 24"><path d="M12 8.6 A3.4 3.4 0 1 0 12 15.4 A3.4 3.4 0 1 0 12 8.600001Z M10 2.6 L9.4 5.2 L7.4 6.4 L4.8 5.6 L2.8 9 L4.8 10.8 V13.2 L2.8 15 L4.8 18.4 L7.4 17.6 L9.4 18.8 L10 21.4 H14 L14.6 18.8 L16.6 17.6 L19.2 18.4 L21.2 15 L19.2 13.2 V10.8 L21.2 9 L19.2 5.6 L16.6 6.4 L14.6 5.2 L14 2.6Z" fill="none" stroke="#333" stroke-width="1.7" stroke-linejoin="round"/></svg>
<!--SCREEN-->
<!--OVERLAYS-->
<!-- green corners -->
<div class="a" style="left:42px;top:93px;width:87px;height:4px;background:#07d17b;"></div>
<div class="a" style="left:42px;top:93px;width:4.5px;height:87px;background:#07d17b;"></div>
<div class="a" style="left:1340px;top:93px;width:86px;height:4px;background:#07d17b;"></div>
<div class="a" style="left:1422px;top:93px;width:4.5px;height:87px;background:#07d17b;"></div>
<div class="a" style="left:42px;top:867.5px;width:87px;height:4.5px;background:#07d17b;"></div>
<div class="a" style="left:42px;top:786px;width:4.5px;height:86px;background:#07d17b;"></div>
<div class="a" style="left:1340px;top:867.5px;width:86px;height:4.5px;background:#07d17b;"></div>
<div class="a" style="left:1422px;top:786px;width:4.5px;height:86px;background:#07d17b;"></div>

<!-- tencent mini bar -->
<div class="a" style="left:674px;top:93px;width:122px;height:18.8px;background:#6c6c6c;border-radius:0 0 4px 4px;box-shadow:0 1px 3px rgba(0,0,0,.35);"></div>
<svg class="a" style="left:679.6px;top:97.6px" width="12" height="9.4" viewBox="0 0 12 9.4"><rect x=".2" y="5.2" width="2.6" height="4" rx="1" fill="#0fc362"/><rect x="4.3" y="2.8" width="2.6" height="6.4" rx="1" fill="#0fc362"/><rect x="8.4" y=".4" width="2.6" height="8.8" rx="1" fill="#0fc362"/></svg>
<div class="a" style="left:695.3px;top:98.2px;width:7.8px;height:7.8px;border-radius:50%;background:#12c665;"></div>
<svg class="cj" style="left:708.5px;top:95.73px;" width="42.40" height="12.72" viewBox="0 -1000 4000 1200" preserveAspectRatio="none"><text x="0" y="0" fill="#dedede">腾讯会议</text></svg>
<svg class="a" style="left:757.4px;top:95.3px" width="14" height="14" viewBox="0 0 14 14"><circle cx="7" cy="7" r="6" fill="none" stroke="#b9b9b9" stroke-width="1"/><path d="M7 6 V10" stroke="#b9b9b9" stroke-width="1.1"/><circle cx="7" cy="4" r=".7" fill="#b9b9b9"/></svg>
<svg class="a" style="left:778.5px;top:97px" width="12" height="11" viewBox="0 0 12 11"><path d="M.4 3.4 H2.8 L6.4 .6 V10.4 L2.8 7.6 H.4Z" fill="#14c868"/><path d="M8.2 2.8 C9.6 4.2 9.6 6.8 8.2 8.2" fill="none" stroke="#0f9a50" stroke-width="1.5"/></svg>
<!-- speaking overlay -->
<div class="a" style="left:1175px;top:304px;width:219.6px;height:32.6px;background:#2b2e30;"></div>
<svg class="a" style="left:1185px;top:313.6px" width="12" height="14" viewBox="0 0 12 14"><rect x="3.4" y=".5" width="5.2" height="8.2" rx="2.6" fill="#8b8e91"/><path d="M3.4 3.6 H8.6 V6.1 C8.6 7.6 7.5 8.7 6 8.7 C4.5 8.7 3.4 7.6 3.4 6.1Z" fill="#0ecb62"/><path d="M1.4 6.2 C1.4 9 3.4 10.6 6 10.6 C8.6 10.6 10.6 9 10.6 6.2 M6 10.6 V12.8 M3.8 13 H8.2" fill="none" stroke="#8b8e91" stroke-width="1"/></svg>
<div class="a" style="left:1207px;top:311px;width:1px;height:18px;background:#1c1e20;"></div>
<svg class="cj" style="left:1215.2px;top:314.05px;" width="104.37" height="13.26" viewBox="0 -1000 9445 1200" preserveAspectRatio="none"><text x="0" y="0" fill="#f4f4f4" textLength="9445">正在讲话: 生地楼180;</text></svg>
<svg class="a" style="left:1342px;top:310px" width="41" height="21.5" viewBox="0 0 43 21"><defs><linearGradient id="lg2" x1="0" y1="0" x2="1" y2="1"><stop offset="0" stop-color="#4c4f51"/><stop offset="1" stop-color="#35383a"/></linearGradient></defs><path d="M0 13.5 L11.5 0 L21 9.5 L11 21 H5.5Z" fill="url(#lg2)"/><path d="M13 11.5 L23.5 1 V14.5 L19.5 20 L17.5 20Z" fill="#3f4244"/><path d="M24.5 1 L37.5 14 L31.5 20.5 L24.5 14Z" fill="url(#lg2)"/></svg>
<!-- pdf floating button -->
<div class="a" style="left:42px;top:719px;width:33px;height:26.8px;background:#c9c9c9;border-radius:0 4px 4px 0;"></div>
<svg class="a" style="left:51px;top:725.5px" width="16" height="14" viewBox="0 0 16 14"><path d="M4.2 1.4 H15 M6.6 7 H15 M4.2 12.6 H15" stroke="#fff" stroke-width="1.5"/><circle cx="1.2" cy="1.4" r=".9" fill="#fff"/><circle cx="3.6" cy="7" r=".9" fill="#fff"/><circle cx="1.2" cy="12.6" r=".9" fill="#fff"/></svg>
<!-- chat bubble -->
<div class="a" style="left:11px;top:799px;width:31px;height:27px;background:#1e2123;border-radius:4px 0 0 4px;"></div>
<div class="a" style="left:42px;top:799px;width:95px;height:27px;background:#686b6c;border-radius:0 4px 4px 0;"></div>
<div class="a" style="left:42px;top:799px;width:4.5px;height:27px;background:#0e5a3c;"></div>
<svg class="a" style="left:18.5px;top:805px" width="15" height="15" viewBox="0 0 15 15"><circle cx="7.5" cy="7.5" r="7.2" fill="#fff"/><circle cx="5" cy="5.6" r="1" fill="#1e2123"/><circle cx="10" cy="5.6" r="1" fill="#1e2123"/><path d="M3 8 H12 C12 11 10 12.8 7.5 12.8 C5 12.8 3 11 3 8Z" fill="#1e2123"/></svg>
<div class="a" style="left:38.6px;top:804px;width:1px;height:17px;background:#4a4d4f;"></div>
<svg class="cj" style="left:51.0px;top:806.23px;" width="51.24" height="12.72" viewBox="0 -1000 4834 1200" preserveAspectRatio="none"><text x="0" y="0" fill="#d8d8d8" textLength="4834">说点什么...</text></svg>
<div class="a" style="left:111px;top:804px;width:1px;height:17px;background:#8a8c8d;"></div>
<svg class="a" style="left:120px;top:807.5px" width="8" height="10" viewBox="0 0 8 10"><path d="M6 1 L2 5 L6 9" fill="none" stroke="#fff" stroke-width="1.5"/></svg>
<!-- cursor -->
<svg class="a" style="left:1032.7px;top:464px" width="10.2" height="15.7" viewBox="0 0 11 17"><path d="M1 1 V13 L3.8 10.4 L5.8 15.2 L7.8 14.4 L5.8 9.8 H9.6Z" fill="#fff" stroke="#333" stroke-width=".9" stroke-linejoin="round"/></svg>


<!-- ===== right panel ===== -->

<div class="a" style="left:1469px;top:54px;width:262px;height:840px;background:#000;"></div>
<div class="a" style="left:1469px;top:54px;width:7px;height:840px;background:#5b5653;"></div>
<div class="a" style="left:1476px;top:54px;width:246px;height:132px;background:#232427;border:1px solid #404246;border-top:none;box-sizing:border-box;border-radius:0 0 2px 2px;"></div>
<div class="a" style="left:1476px;top:186px;width:246px;height:8px;background:linear-gradient(90deg,#505356 0%,#36383a 40%,#080808 80%,#000 100%);"></div>
<div class="a" style="left:1476px;top:194px;width:246px;height:138px;background:#232427;border:1px solid #404246;box-sizing:border-box;border-radius:2px;"></div>
<div class="a" style="left:1476px;top:332px;width:246px;height:8px;background:linear-gradient(90deg,#505356 0%,#36383a 40%,#080808 80%,#000 100%);"></div>
<div class="a" style="left:1476px;top:340px;width:246px;height:138px;background:#232427;border:1px solid #404246;box-sizing:border-box;border-radius:2px;"></div>
<div class="a" style="left:1476px;top:478px;width:246px;height:8px;background:linear-gradient(90deg,#505356 0%,#36383a 40%,#080808 80%,#000 100%);"></div>
<div class="a" style="left:1476px;top:486px;width:246px;height:138px;background:#232427;border:1px solid #404246;box-sizing:border-box;border-radius:2px;"></div>
<div class="a" style="left:1476px;top:624px;width:246px;height:8px;background:linear-gradient(90deg,#505356 0%,#36383a 40%,#080808 80%,#000 100%);"></div>
<div class="a" style="left:1476px;top:632px;width:246px;height:138px;background:#232427;border:1px solid #404246;box-sizing:border-box;border-radius:2px;"></div>
<div class="a" style="left:1476px;top:770px;width:246px;height:8px;background:linear-gradient(90deg,#505356 0%,#36383a 40%,#080808 80%,#000 100%);"></div>
<div class="a" style="left:1476px;top:778px;width:246px;height:116px;background:#232427;border:1px solid #404246;border-bottom:none;box-sizing:border-box;border-radius:2px 2px 0 0;"></div>
<div class="a" style="left:1454px;top:464px;width:15px;height:37px;background:#1a1b1d;border-radius:4px 0 0 4px;"></div>
<svg class="a" style="left:1456px;top:475px" width="11" height="14" viewBox="0 0 11 14"><path d="M3.5 2.5 L8 7 L3.5 11.5" fill="none" stroke="#9a9a9a" stroke-width="1.4"/></svg>
<div class="a" style="left:1470.5px;top:472px;width:1px;height:22px;background:#8a8785;"></div>
<div class="a" style="left:1473px;top:472px;width:1px;height:22px;background:#8a8785;"></div>

<!-- avatars -->

<svg class="a" style="left:1565.7px;top:77.2px" width="68" height="68" viewBox="0 0 68 68"><defs><clipPath id="c1"><circle cx="34" cy="34" r="34"/></clipPath><filter id="bl1" x="-10%" y="-10%" width="120%" height="120%"><feGaussianBlur stdDeviation=".65"/></filter></defs><g clip-path="url(#c1)"><g filter="url(#bl1)"><rect width="68" height="68" fill="#46622e"/><path d="M0 14 H24 L20 30 H0Z" fill="#2f4a26"/><path d="M24 12 H50 L52 24 L44 30 H26Z" fill="#6c8c46"/><path d="M50 12 H68 V30 H50Z" fill="#5c7c44"/><path d="M8 22 L14 20 L16 26 L9 27Z" fill="#9aa84a" opacity=".7"/><ellipse cx="10" cy="37" rx="10" ry="5.4" fill="#3a6a1c"/><rect x="8.6" y="40" width="2.4" height="5" fill="#3a3a22"/><ellipse cx="22" cy="36" rx="4" ry="3.4" fill="#3f6e22"/><ellipse cx="50" cy="34" rx="7.4" ry="3.8" fill="#3c7020"/><ellipse cx="62" cy="34.6" rx="6" ry="3.4" fill="#3c7020"/><rect x="42" y="38" width="26" height="3.2" fill="#4a4a3a"/><rect x="46" y="40" width="22" height="4.6" fill="#35601e"/><rect y="43.5" width="68" height="25" fill="#a4a96e"/><path d="M0 43.5 H68 V46 H0Z" fill="#7e8a50" opacity=".7"/><path d="M40 50 L68 46 V62 L52 68 H40Z" fill="#b2b27c" opacity=".6"/><path d="M25 24 C26 21 30 21 33 23 C35 21 40 21 43 24 C45 27 44 30 41 32 L40.5 42 L40 58 L38 68 H20 C22 62 26 60 27 56 L26.6 42 L26 32 C25 29 24.5 26 25 24Z" fill="#b5a88e"/><path d="M34 24 C38 23 42 25 42 28 L40.5 34 L40 58 L36 68 H31 C33 62 34 50 33.5 40Z" fill="#978b74" opacity=".55"/><circle cx="29.5" cy="25.5" r="2.2" fill="#6e6656"/><circle cx="28" cy="36" r="1.4" fill="#d0c4ac"/><circle cx="37" cy="44" r="1.4" fill="#cfc3aa"/><circle cx="30" cy="52" r="1.5" fill="#8a7e68"/><path d="M13 68 C16 62 24 60 28 62 L26 68Z" fill="#c4bba6"/><path d="M22 20 L28 24 L26.5 18.6Z" fill="#f4dc40"/><path d="M27 19.4 C28 16.4 32.4 16.6 32.6 19.6 C32.6 21.4 30 22.4 28 22.6Z" fill="#f2c41c"/></g></g></svg>
<svg class="a" style="left:1565.9px;top:223.4px" width="68" height="68" viewBox="0 0 68 68"><defs><clipPath id="c2"><circle cx="34" cy="34" r="34"/></clipPath><filter id="bl2" x="-10%" y="-10%" width="120%" height="120%"><feGaussianBlur stdDeviation=".8"/></filter><linearGradient id="sk" x1="0" y1="0" x2="0" y2="1"><stop offset="0" stop-color="#c4c6c6"/><stop offset=".7" stop-color="#d6d6d2"/><stop offset="1" stop-color="#dcd4c8"/></linearGradient><linearGradient id="wt" x1="0" y1="0" x2="0" y2="1"><stop offset="0" stop-color="#c8c0b4"/><stop offset=".25" stop-color="#b0b0ac"/><stop offset=".6" stop-color="#8e9292"/><stop offset="1" stop-color="#a8acac"/></linearGradient></defs><g clip-path="url(#c2)"><g filter="url(#bl2)"><rect width="68" height="36" fill="url(#sk)"/><ellipse cx="20" cy="12" rx="22" ry="7" fill="#e2e2e0" opacity=".6"/><ellipse cx="44" cy="24" rx="18" ry="5" fill="#bcc0c4" opacity=".6"/><rect y="35" width="68" height="33" fill="url(#wt)"/><path d="M44 35 C50 28 58 24 68 23 V35Z" fill="#7c4232"/><path d="M52 28 C57 25 62 23.6 68 23 V27 C62 27 57 28 52 30Z" fill="#3c4a38"/><path d="M44 36.5 L68 36.5 V47 C60 45 52 42 44 36.5Z" fill="#5c3c2a" opacity=".9"/><path d="M0 33.4 C10 33 30 34 44 34.4 H68 V36.8 H0Z" fill="#1c2818"/><path d="M0 36.8 H30 L22 38.6 H0Z" fill="#2c3626" opacity=".8"/></g></g></svg>
<svg class="a" style="left:1565.7px;top:369.5px" width="68" height="68" viewBox="0 0 68 68"><circle cx="34" cy="34" r="34" fill="#0a6cff"/></svg>
<span class="t" style="left:1594.20px;top:397.00px;font:normal normal 16.5px/16.5px 'Liberation Sans',sans-serif;color:#ffffff;letter-spacing:-0.005px;">X</span>
<svg class="a" style="left:1565.9px;top:515.6px" width="68" height="68" viewBox="0 0 68 68"><defs><clipPath id="c4"><circle cx="34" cy="34" r="34"/></clipPath><filter id="bl4" x="-10%" y="-10%" width="120%" height="120%"><feGaussianBlur stdDeviation=".8"/></filter></defs><g clip-path="url(#c4)"><g filter="url(#bl4)"><rect width="68" height="68" fill="#b07040"/><path d="M0 20 L18 36 L56 60 L40 68 H0Z" fill="#c4acd2"/><path d="M0 0 H68 V12 H0Z" fill="#7a5a3a"/><rect x="40" y="9" width="28" height="22" fill="#e4d6c0"/><rect x="44" y="27" width="24" height="8" fill="#5e3a32"/><rect x="31" y="6" width="10" height="16" fill="#9ab86a"/><rect x="32" y="12" width="8" height="4" fill="#e8e8d8"/><path d="M40 0 H56 L52 9 H40Z" fill="#4a4048"/><path d="M24 0 H32 L30 26 H22Z" fill="#e6b8c0"/><ellipse cx="54" cy="41" rx="10" ry="5" fill="#e8e0cc" transform="rotate(14 54 41)"/><path d="M12 36 C10 44 12 54 14 60 L18 64 H38 L36 50 C42 48 42 42 38 40 L28 34Z" fill="#e2b2bc"/><circle cx="17.5" cy="21.5" r="10.5" fill="#f0e8da"/><circle cx="9" cy="12.5" r="3.8" fill="#efe6d8"/><circle cx="22" cy="12" r="3.8" fill="#efe6d8"/><circle cx="18" cy="22" r="1" fill="#2a1a1a"/><circle cx="13.5" cy="26" r="1.3" fill="#3a2020"/><path d="M16 60 H22 V66 H12Z M30 60 H38 L38 66 H30Z" fill="#f4eee6"/><path d="M18 44 C24 48 30 48 34 46 L33 50 C28 52 22 51 18 48Z" fill="#ecd8c0"/></g></g></svg>
<svg class="a" style="left:1565.9px;top:661.7px" width="68" height="68" viewBox="0 0 68 68"><defs><clipPath id="c5"><circle cx="34" cy="34" r="34"/></clipPath><filter id="bl5" x="-10%" y="-10%" width="120%" height="120%"><feGaussianBlur stdDeviation=".8"/></filter><linearGradient id="or" x1="0" y1="0" x2="0" y2="1"><stop offset="0" stop-color="#f8cc68"/><stop offset=".55" stop-color="#f7be54"/><stop offset=".75" stop-color="#f29a34"/><stop offset="1" stop-color="#ee8426"/></linearGradient></defs><g clip-path="url(#c5)"><g filter="url(#bl5)"><rect width="68" height="68" fill="#ffffff"/><rect x="5" y="4" width="59" height="60" fill="url(#or)"/><path d="M5 19 L13 10 L22 19Z" fill="#eca85a" opacity=".8"/><path d="M34 57 L36 46 L38 46 L39 52 L41 55 L38 56 L37 64 L35 64Z" fill="#f2ead8"/><path d="M47 52 C47 49 50 48 52 49 L58 52 L64 50 V64 H50 L47 62Z" fill="#e03a4a" stroke="#fff" stroke-width="1"/><circle cx="52" cy="57" r="1.3" fill="#f8d040"/><circle cx="56" cy="55" r=".7" fill="#f8d040"/></g></g></svg>
<svg class="a" style="left:1565.8px;top:807.7px" width="68" height="68" viewBox="0 0 68 68"><defs><clipPath id="c6"><circle cx="34" cy="34" r="34"/></clipPath><filter id="bl6" x="-10%" y="-10%" width="120%" height="120%"><feGaussianBlur stdDeviation=".8"/></filter></defs><g clip-path="url(#c6)"><g filter="url(#bl6)"><rect width="68" height="68" fill="#aaa292"/><path d="M0 0 H68 V24 C60 22 50 24 40 22 C28 20 14 22 0 21Z" fill="#2e4c3e"/><path d="M50 4 C56 6 62 12 68 22 V28 H56Z" fill="#223a2c"/><path d="M38 16 L42 12 L45 22 L44 28 H38Z" fill="#35553f"/><rect y="21" width="68" height="8" fill="#b8b2a0" opacity=".7"/><path d="M0 44 H68 V68 H0Z" fill="#a4927e"/><path d="M4 56 C10 50 20 50 26 54 L40 56 L44 64 H4Z" fill="#8a8274"/><path d="M19 20 C22 15 30 14 33 17 L37 27 L38 40 L30 44 L30 56 L22 58 L18 46 C16 38 16 28 19 20Z" fill="#4a5838"/><path d="M19 38 H30 L32 44 L30 57 H23 L19 46Z" fill="#4e3a2c"/><circle cx="31" cy="12.5" r="4.6" fill="#b88a6a"/><path d="M26 10.5 C27 6 33 5 36 8 L39 10 L33 11 L27 12.5Z" fill="#dfe4e4"/><path d="M33 7 C35 7 37 8 39 10 L34 10.6Z" fill="#3a7a78"/><path d="M38 32 C40 28 44 27 47 29 L50 32 L46 36 L46 52 L42 54 L38 50Z" fill="#e8e4e0"/><path d="M39 30 C41 27 45 27 47 29 L46 34 L40 35Z" fill="#5a5a5c"/><path d="M27 56 H33 L36 60 H27Z M40 54 L45 53 L51 58 H41Z" fill="#7a4a30"/></g></g></svg>
<div class="a" style="left:1571.3px;top:864px;width:64px;height:17px;background:rgba(30,30,32,.88);"></div>
<svg class="a" style="left:1597px;top:870px" width="12" height="8" viewBox="0 0 12 8"><path d="M1 1 L6 6.4 L11 1" fill="none" stroke="#fff" stroke-width="1.4"/></svg>
<!-- speaking bar in panel -->
<div class="a" style="left:1486.7px;top:59.7px;width:220px;height:32.3px;background:#2c2e31;border-radius:4px;"></div>
<svg class="a" style="left:1496.6px;top:68.6px" width="13.0" height="14.0" viewBox="0 0 13 14"><rect x="4.3" y=".6" width="4.4" height="7.6" rx="2.2" fill="#7d8084"/><path d="M2.2 5.8 C2.2 8.6 4 10.2 6.5 10.2 C9 10.2 10.8 8.6 10.8 5.8 M6.5 10.2 V12.6 M4.2 12.8 H8.8" fill="none" stroke="#7d8084" stroke-width="1.1"/><path d="M1.2 12.4 L11.8 1.2" stroke="#e8474a" stroke-width="1.3"/></svg>
<div class="a" style="left:1519px;top:67px;width:1px;height:18px;background:#151617;"></div>
<svg class="cj" style="left:1527.4px;top:69.55px;" width="104.37" height="13.26" viewBox="0 -1000 9445 1200" preserveAspectRatio="none"><text x="0" y="0" fill="#ffffff" textLength="9445">正在讲话: 生地楼180;</text></svg>
<svg class="a" style="left:1656px;top:65.5px" width="43" height="21" viewBox="0 0 43 21"><defs><linearGradient id="lg1" x1="0" y1="0" x2="1" y2="1"><stop offset="0" stop-color="#55585b"/><stop offset="1" stop-color="#393b3e"/></linearGradient></defs><path d="M0 13.5 L11.5 0 L21 9.5 L11 21 H5.5Z" fill="url(#lg1)"/><path d="M13 11.5 L23.5 1 V14.5 L19.5 20 L17.5 20Z" fill="#45484b"/><path d="M24.5 1 L37.5 14 L31.5 20.5 L24.5 14Z" fill="url(#lg1)"/></svg>
<svg class="a" style="left:1685.8px;top:70px" width="14" height="12" viewBox="0 0 14 12"><path d="M6 .4 L.6 5 L6 9.6 V6.8 C9.4 6.6 11.6 7.8 13 11.4 C13 6.4 10.6 3.4 6 3.2Z" fill="#c9cacc"/></svg>
<!-- name labels -->
<div class="a" style="left:1479.5px;top:167.2px;width:54px;height:17.5px;background:#111214;border-radius:3px 4px 0 3px;"></div><svg class="a" style="left:1482.7px;top:169.39999999999998px" width="13.0" height="14.0" viewBox="0 0 13 14"><rect x="4.3" y=".6" width="4.4" height="7.6" rx="2.2" fill="#fff"/><path d="M2.2 5.8 C2.2 8.6 4 10.2 6.5 10.2 C9 10.2 10.8 8.6 10.8 5.8 M6.5 10.2 V12.6 M4.2 12.8 H8.8" fill="none" stroke="#fff" stroke-width="1.1"/><path d="M1.2 12.4 L11.8 1.2" stroke="#e8474a" stroke-width="1.3"/></svg><svg class="cj" style="left:1500.0px;top:170.38px;" width="30.60" height="12.24" viewBox="0 -1000 3000 1200" preserveAspectRatio="none"><text x="0" y="0" fill="#ffffff">吴志峰</text></svg>
<div class="a" style="left:1479.5px;top:313.2px;width:72px;height:17.5px;background:#111214;border-radius:3px 4px 0 3px;"></div><svg class="a" style="left:1482.7px;top:315.4px" width="13.0" height="14.0" viewBox="0 0 13 14"><rect x="4.3" y=".6" width="4.4" height="7.6" rx="2.2" fill="#fff"/><path d="M2.2 5.8 C2.2 8.6 4 10.2 6.5 10.2 C9 10.2 10.8 8.6 10.8 5.8 M6.5 10.2 V12.6 M4.2 12.8 H8.8" fill="none" stroke="#fff" stroke-width="1.1"/><path d="M1.2 12.4 L11.8 1.2" stroke="#e8474a" stroke-width="1.3"/></svg><span class="t" style="left:1500.60px;top:319.00px;font:normal normal 11.4px/11.4px 'Liberation Sans',sans-serif;color:#ffffff;letter-spacing:-0.227px;">luozhanfu</span>
<div class="a" style="left:1479.5px;top:459.3px;width:63px;height:17.5px;background:#111214;border-radius:3px 4px 0 3px;"></div><svg class="a" style="left:1482.7px;top:461.5px" width="13.0" height="14.0" viewBox="0 0 13 14"><rect x="4.3" y=".6" width="4.4" height="7.6" rx="2.2" fill="#fff"/><path d="M2.2 5.8 C2.2 8.6 4 10.2 6.5 10.2 C9 10.2 10.8 8.6 10.8 5.8 M6.5 10.2 V12.6 M4.2 12.8 H8.8" fill="none" stroke="#fff" stroke-width="1.1"/><path d="M1.2 12.4 L11.8 1.2" stroke="#e8474a" stroke-width="1.3"/></svg><span class="t" style="left:1500.40px;top:465.00px;font:normal normal 11.4px/11.4px 'Liberation Sans',sans-serif;color:#ffffff;letter-spacing:-0.379px;">XiangYe</span>
<div class="a" style="left:1479.5px;top:605.4px;width:54px;height:17.5px;background:#111214;border-radius:3px 4px 0 3px;"></div><svg class="a" style="left:1482.7px;top:607.6px" width="13.0" height="14.0" viewBox="0 0 13 14"><rect x="4.3" y=".6" width="4.4" height="7.6" rx="2.2" fill="#fff"/><path d="M2.2 5.8 C2.2 8.6 4 10.2 6.5 10.2 C9 10.2 10.8 8.6 10.8 5.8 M6.5 10.2 V12.6 M4.2 12.8 H8.8" fill="none" stroke="#fff" stroke-width="1.1"/><path d="M1.2 12.4 L11.8 1.2" stroke="#e8474a" stroke-width="1.3"/></svg><svg class="cj" style="left:1500.0px;top:608.58px;" width="30.60" height="12.24" viewBox="0 -1000 3000 1200" preserveAspectRatio="none"><text x="0" y="0" fill="#ffffff">黄君望</text></svg>
<div class="a" style="left:1479.5px;top:751.5px;width:54px;height:17.5px;background:#111214;border-radius:3px 4px 0 3px;"></div><svg class="a" style="left:1482.7px;top:753.7px" width="13.0" height="14.0" viewBox="0 0 13 14"><rect x="4.3" y=".6" width="4.4" height="7.6" rx="2.2" fill="#fff"/><path d="M2.2 5.8 C2.2 8.6 4 10.2 6.5 10.2 C9 10.2 10.8 8.6 10.8 5.8 M6.5 10.2 V12.6 M4.2 12.8 H8.8" fill="none" stroke="#fff" stroke-width="1.1"/><path d="M1.2 12.4 L11.8 1.2" stroke="#e8474a" stroke-width="1.3"/></svg><svg class="cj" style="left:1500.0px;top:754.68px;" width="30.60" height="12.24" viewBox="0 -1000 3000 1200" preserveAspectRatio="none"><text x="0" y="0" fill="#ffffff">王健衡</text></svg>
<!--PANEL-->
<!-- ===== bottom bar ===== -->
<div class="a" style="left:0;top:894px;width:1731px;height:44px;background:#fff;"></div>

<!-- bottom toolbar -->
<svg class="a" style="left:21px;top:897.5px" width="18" height="23" viewBox="0 0 18 23"><rect x="5.4" y=".6" width="7.4" height="13" rx="3.7" fill="#444548"/><path d="M2 9.6 C2 14.4 5 17 9.1 17 C13.2 17 16.2 14.4 16.2 9.6 M9.1 17 V21.4 M4.4 21.6 H13.8" fill="none" stroke="#444548" stroke-width="1.5"/><path d="M1 19 L16.2 4" stroke="#fff" stroke-width="3.4"/><path d="M1 19 L16.2 4" stroke="#ff3d3d" stroke-width="1.8"/></svg>
<svg class="cj" style="left:10.1px;top:922.02px;" width="39.20" height="11.76" viewBox="0 -1000 4000 1200" preserveAspectRatio="none"><text x="0" y="0" fill="#4a4d52" font-weight="500">解除静音</text></svg>
<svg class="a" style="left:56.0px;top:913.2px" width="9" height="6" viewBox="0 0 9 6"><path d="M.8 5 L4.5 1.2 L8.2 5" fill="none" stroke="#4a4c50" stroke-width="1.3"/></svg>
<svg class="a" style="left:84.5px;top:900px" width="23" height="18" viewBox="0 0 23 18"><rect x=".4" y="2.2" width="14.6" height="13.8" rx="1.6" fill="#444548"/><path d="M16 7 L21.8 3.4 V14.8 L16 11.2Z" fill="#444548" stroke="#444548" stroke-width=".8" stroke-linejoin="round"/><path d="M1.6 16.6 L16 1.2" stroke="#fff" stroke-width="3.4"/><path d="M1.6 16.6 L16 1.2" stroke="#ff3d3d" stroke-width="1.8"/></svg>
<svg class="cj" style="left:76.0px;top:922.02px;" width="39.20" height="11.76" viewBox="0 -1000 4000 1200" preserveAspectRatio="none"><text x="0" y="0" fill="#4a4d52" font-weight="500">开启视频</text></svg>
<svg class="a" style="left:121.6px;top:913.2px" width="9" height="6" viewBox="0 0 9 6"><path d="M.8 5 L4.5 1.2 L8.2 5" fill="none" stroke="#4a4c50" stroke-width="1.3"/></svg>
<svg class="a" style="left:619.8px;top:899.4px" width="23" height="20" viewBox="0 0 23 20"><rect x="1" y="1" width="20.2" height="14.2" rx="1.4" fill="#444548" stroke="#0fc463" stroke-width="1.7"/><path d="M6.4 19 H15.8" stroke="#444548" stroke-width="1.5"/><path d="M8 11 C8.4 8.4 10 7.2 12 7.2 V5.4 L15 8.2 L12 11 V9.2 C10.4 9.2 9 9.8 8 11Z" fill="#fff"/></svg>
<svg class="cj" style="left:611.3px;top:922.22px;" width="39.20" height="11.76" viewBox="0 -1000 4000 1200" preserveAspectRatio="none"><text x="0" y="0" fill="#4a4d52" font-weight="500">共享屏幕</text></svg>
<svg class="a" style="left:656.3px;top:913.6px" width="9" height="6" viewBox="0 0 9 6"><path d="M.8 5 L4.5 1.2 L8.2 5" fill="none" stroke="#4a4c50" stroke-width="1.3"/></svg>
<svg class="a" style="left:686.2px;top:898.8px" width="18" height="21" viewBox="0 0 18 21"><path d="M9 .4 C11 1.6 14 2.4 17.2 2.6 V9.6 C17.2 14.6 13.6 18.4 9 20.4 C4.4 18.4 .8 14.6 .8 9.6 V2.6 C4 2.4 7 1.6 9 .4Z" fill="#444548"/><path d="M5 9.6 L9 6 L13 9.6 M5 13.6 L9 10 L13 13.6" fill="none" stroke="#fff" stroke-width="1.5"/></svg>
<svg class="cj" style="left:684.9px;top:922.22px;" width="19.60" height="11.76" viewBox="0 -1000 2000 1200" preserveAspectRatio="none"><text x="0" y="0" fill="#4a4d52" font-weight="500">安全</text></svg>
<svg class="a" style="left:738.6px;top:899.2px" width="21" height="20" viewBox="0 0 21 20"><circle cx="9" cy="4.6" r="3.9" fill="#444548"/><path d="M.4 18.6 C.4 12.6 4 9.4 9 9.4 C12 9.4 14.4 10.6 16 12.8 V18.6Z" fill="#444548"/><circle cx="15.6" cy="14.6" r="4.9" fill="#fff"/><circle cx="15.6" cy="14.6" r="3.9" fill="#444548"/><path d="M15.6 12.4 V16.8 M13.4 14.6 H17.8" stroke="#fff" stroke-width="1.3"/></svg>
<svg class="cj" style="left:738.0px;top:922.22px;" width="19.60" height="11.76" viewBox="0 -1000 2000 1200" preserveAspectRatio="none"><text x="0" y="0" fill="#4a4d52" font-weight="500">邀请</text></svg>
<svg class="a" style="left:800.8px;top:899.2px" width="21" height="19" viewBox="0 0 21 19"><circle cx="11.6" cy="4.6" r="3.7" fill="#b4b5b7"/><path d="M12 9.6 C16.6 9.8 20.2 13 20.4 18.6 H16Z" fill="#b4b5b7"/><circle cx="9.3" cy="4.6" r="3.9" fill="#444548"/><path d="M.4 18.6 C.4 12.6 4 9.4 9.3 9.4 C14.6 9.4 18.2 12.6 18.2 18.6Z" fill="#444548"/></svg>
<svg class="cj" style="left:781.13px;top:922.22px;" width="57.35" height="11.76" viewBox="0 -1000 5852 1200" preserveAspectRatio="none"><text x="0" y="0" fill="#4a4d52" font-weight="500" textLength="5852">管理成员(61)</text></svg>
<svg class="a" style="left:863.2px;top:901.8px" width="18" height="18" viewBox="0 0 18 18"><path d="M2 .2 H15.6 C16.8 .2 17.6 1 17.6 2.2 V16.8 L13.6 13.6 H2 C.8 13.6 0 12.8 0 11.6 V2.2 C0 1 .8 .2 2 .2Z" fill="#444548"/><circle cx="4.6" cy="7" r="1.2" fill="#fff"/><circle cx="8.8" cy="7" r="1.2" fill="#fff"/><circle cx="13" cy="7" r="1.2" fill="#fff"/></svg>
<svg class="cj" style="left:862.5px;top:921.92px;" width="19.60" height="11.76" viewBox="0 -1000 2000 1200" preserveAspectRatio="none"><text x="0" y="0" fill="#4a4d52" font-weight="500">聊天</text></svg>
<svg class="a" style="left:914.5px;top:898.5px" width="21" height="21" viewBox="0 0 21 21"><circle cx="10.4" cy="10.4" r="9.5" fill="none" stroke="#444548" stroke-width="1.4"/><circle cx="10.4" cy="10.4" r="7" fill="#444548"/></svg>
<svg class="cj" style="left:915.2px;top:921.92px;" width="19.60" height="11.76" viewBox="0 -1000 2000 1200" preserveAspectRatio="none"><text x="0" y="0" fill="#4a4d52" font-weight="500">录制</text></svg>
<svg class="a" style="left:951.8px;top:913.2px" width="9" height="6" viewBox="0 0 9 6"><path d="M.8 5 L4.5 1.2 L8.2 5" fill="none" stroke="#4a4c50" stroke-width="1.3"/></svg>
<svg class="a" style="left:980px;top:900.2px" width="21" height="18" viewBox="0 0 21 18"><rect x="5.6" y="0" width="9.2" height="8.2" rx="1.4" fill="#444548"/><rect x=".2" y="9.5" width="9.2" height="8" rx="1.4" fill="#444548"/><rect x="11" y="9.5" width="9.2" height="8" rx="1.4" fill="#444548"/></svg>
<svg class="cj" style="left:970.6px;top:921.92px;" width="39.20" height="11.76" viewBox="0 -1000 4000 1200" preserveAspectRatio="none"><text x="0" y="0" fill="#4a4d52" font-weight="500">分组讨论</text></svg>
<svg class="a" style="left:1035px;top:898.4px" width="20" height="20" viewBox="0 0 20 20"><rect x=".2" y="2.4" width="7.6" height="7.6" rx="1.4" fill="#444548"/><rect x=".2" y="11.9" width="7.6" height="7.7" rx="1.4" fill="#444548"/><rect x="9.9" y="11.9" width="8" height="7.7" rx="1.4" fill="#444548"/><path d="M14.3 .9 L19 5.6 L14.3 10.3 L9.6 5.6Z" fill="none" stroke="#444548" stroke-width="1.2" stroke-linejoin="round"/></svg>
<svg class="cj" style="left:1034.2px;top:921.92px;" width="19.60" height="11.76" viewBox="0 -1000 2000 1200" preserveAspectRatio="none"><text x="0" y="0" fill="#4a4d52" font-weight="500">应用</text></svg>
<svg class="a" style="left:1088px;top:898.6px" width="21" height="21" viewBox="0 0 24 24"><path d="M9.6 1 H14.4 L15.2 4.2 L17.6 5.6 L20.8 4.6 L23.2 8.8 L20.8 11 V13 L23.2 15.2 L20.8 19.4 L17.6 18.4 L15.2 19.8 L14.4 23 H9.6 L8.8 19.8 L6.4 18.4 L3.2 19.4 L.8 15.2 L3.2 13 V11 L.8 8.8 L3.2 4.6 L6.4 5.6 L8.8 4.2Z M12 7.6 A4.4 4.4 0 1 0 12 16.4 A4.4 4.4 0 1 0 12 7.6Z" fill="#444548" fill-rule="evenodd" stroke="#444548" stroke-width="1" stroke-linejoin="round"/></svg>
<svg class="cj" style="left:1088.7px;top:921.92px;" width="19.60" height="11.76" viewBox="0 -1000 2000 1200" preserveAspectRatio="none"><text x="0" y="0" fill="#4a4d52" font-weight="500">设置</text></svg>
<div class="a" style="left:1651.3px;top:900.4px;width:67.3px;height:31.6px;box-sizing:border-box;border:1px solid #ff6e6e;border-radius:3px;background:#fff;"></div>
<svg class="cj" style="left:1661.8px;top:909.31px;" width="46.40" height="13.92" viewBox="0 -1000 4000 1200" preserveAspectRatio="none"><text x="0" y="0" fill="#f24b4b">结束会议</text></svg>
<!--BOTTOM-->
<div class="a" style="left:1730px;top:0;width:1px;height:938px;background:#000;"></div>
</body></html>
